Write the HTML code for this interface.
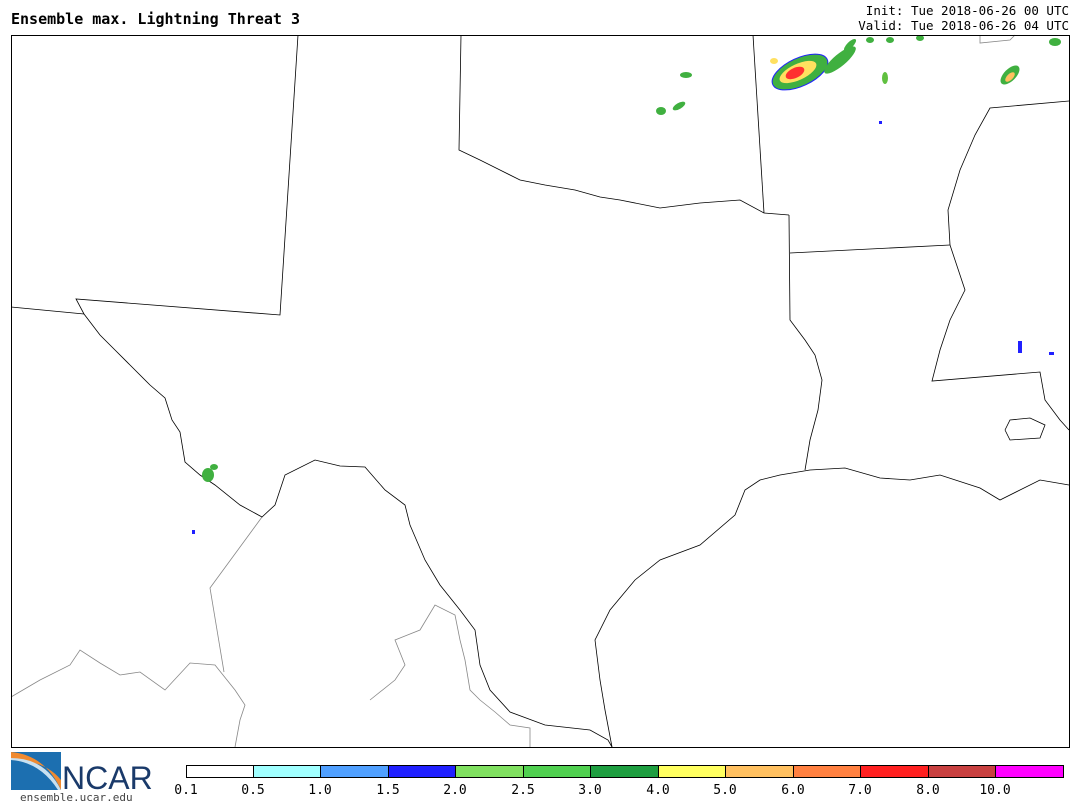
<!DOCTYPE html>
<html><head><style>
body{margin:0;width:1080px;height:810px;background:#fff;overflow:hidden;position:relative;font-family:"DejaVu Sans Mono","Liberation Mono",monospace}
.t{position:absolute;left:11px;top:10px;font-size:15px;font-weight:bold}
.r{position:absolute;right:11px;top:3px;font-size:12.5px;text-align:right;line-height:15px}
.lab{position:absolute;top:783px;font-size:13px;transform:translateX(-50%)}
</style></head><body>
<div class="t">Ensemble max. Lightning Threat 3</div>
<div class="r">Init: Tue 2018-06-26 00 UTC<br>Valid: Tue 2018-06-26 04 UTC</div>
<svg width="1080" height="810" style="position:absolute;left:0;top:0">
<g fill="none" stroke="#888" stroke-width="0.8">
<polyline points="262,517 210,588 224,672"/>
<polyline points="11,697 40,680 50,675 70,665 80,650 100,663 120,675 140,672 165,690 190,663 215,665 235,690 245,705 240,720 235,747"/>
<polyline points="370,700 395,680 405,665 395,640 420,630 435,605 455,615 460,640 465,660 470,690 480,700 495,712 510,725 530,728 530,747"/>
<polyline points="980,35 980,43 1010,40 1015,35"/>
</g>
<g fill="none" stroke="#000" stroke-width="0.8">
<polyline points="298,35 280,315 76,299 84,314 100,335 115,350 130,365 150,385 165,398 172,420 180,432 185,462 200,475 215,485 240,505 262,517 275,505 285,475 315,460 340,466 365,467 385,490 405,505 410,525 425,560 440,585 460,610 475,630 480,665 490,690 510,712 545,725 590,730 608,740 612,747"/>
<polyline points="612,747 605,710 600,680 595,640 610,610 635,580 660,560 700,545 735,515 745,490 760,480 780,475 810,470 845,468 880,478 910,480 940,475 980,488 1000,500 1020,490 1040,480 1069,485"/>
<polyline points="461,35 459,150 480,160 500,170 520,180 545,185 575,190 600,197 620,200 660,208 700,203 740,200 764,213 789,215"/>
<polyline points="753,35 764,213"/>
<polyline points="789,215 790,320 805,340 815,355 822,380 818,410 810,440 805,470"/>
<polyline points="790,253 950,245"/>
<polyline points="950,245 955,260 965,290 950,320 940,350 932,381 1040,372 1045,400 1060,420 1069,430"/>
<polyline points="1069,101 990,108 975,135 960,170 948,210 950,245"/>
<polyline points="11,307 84,314"/>
<polyline points="1005,430 1010,420 1030,418 1045,425 1040,438 1010,440 1005,430"/>
</g>
<g>
<ellipse cx="800" cy="72" rx="30" ry="14" fill="#40b040" stroke="#2020ff" stroke-width="1" transform="rotate(-25 800 72)"/>
<ellipse cx="798" cy="72" rx="20" ry="8" fill="#ffe060" transform="rotate(-25 798 72)"/>
<ellipse cx="795" cy="73" rx="10" ry="5" fill="#ff3030" transform="rotate(-25 795 73)"/>
<ellipse cx="840" cy="60" rx="20" ry="6" fill="#40b040" transform="rotate(-40 840 60)"/>
<ellipse cx="850" cy="45" rx="8" ry="3" fill="#40b040" transform="rotate(-45 850 45)"/>
<ellipse cx="1010" cy="75" rx="12" ry="6" fill="#40b040" transform="rotate(-45 1010 75)"/>
<ellipse cx="1010" cy="77" rx="6" ry="3" fill="#ffc060" transform="rotate(-45 1010 77)"/>
<ellipse cx="885" cy="78" rx="3" ry="6" fill="#60c040"/>
<ellipse cx="661" cy="111" rx="5" ry="4" fill="#40b040"/>
<ellipse cx="679" cy="106" rx="7" ry="3" fill="#40b040" transform="rotate(-30 679 106)"/>
<ellipse cx="686" cy="75" rx="6" ry="3" fill="#40b040"/>
<ellipse cx="208" cy="475" rx="6" ry="7" fill="#40b040"/>
<ellipse cx="214" cy="467" rx="4" ry="3" fill="#40b040"/>
<rect x="1018" y="341" width="4" height="12" fill="#2020ff"/>
<rect x="1049" y="352" width="5" height="3" fill="#2020ff"/>
<rect x="192" y="530" width="3" height="4" fill="#2020ff"/>
<rect x="879" y="121" width="3" height="3" fill="#2020ff"/>
<ellipse cx="870" cy="40" rx="4" ry="3" fill="#40b040"/>
<ellipse cx="890" cy="40" rx="4" ry="3" fill="#40b040"/>
<ellipse cx="920" cy="38" rx="4" ry="3" fill="#40b040"/>
<ellipse cx="1055" cy="42" rx="6" ry="4" fill="#40b040"/>
<ellipse cx="774" cy="61" rx="4" ry="3" fill="#ffe060"/>
</g>
<rect x="11.5" y="35.5" width="1058" height="712" fill="none" stroke="#000" stroke-width="1"/>
<g>
<rect x="11" y="752" width="50" height="38" fill="#1c6fb0"/>
<path d="M11 752 Q45 755 61 790 L61 780 Q45 760 11 760Z" fill="#f08a30"/>
<path d="M11 760 Q40 762 58 790 L61 790 Q45 758 11 758Z" fill="#c8e0f0"/>
<text x="62" y="789" font-family="Liberation Sans,sans-serif" font-size="32" fill="#1a3a6a">NCAR</text>
<text x="20" y="801" font-family="DejaVu Sans Mono,monospace" font-size="11" fill="#444">ensemble.ucar.edu</text>
</g>
<g stroke="none">
<rect x="186" y="765" width="67" height="12" fill="#fff"/>
<rect x="253" y="765" width="67" height="12" fill="#a0ffff"/>
<rect x="320" y="765" width="68" height="12" fill="#50a0ff"/>
<rect x="388" y="765" width="67" height="12" fill="#2020ff"/>
<rect x="455" y="765" width="68" height="12" fill="#80e060"/>
<rect x="523" y="765" width="67" height="12" fill="#50d050"/>
<rect x="590" y="765" width="68" height="12" fill="#1e9e40"/>
<rect x="658" y="765" width="67" height="12" fill="#ffff60"/>
<rect x="725" y="765" width="68" height="12" fill="#ffc060"/>
<rect x="793" y="765" width="67" height="12" fill="#ff8040"/>
<rect x="860" y="765" width="68" height="12" fill="#ff2020"/>
<rect x="928" y="765" width="67" height="12" fill="#c84040"/>
<rect x="995" y="765" width="69" height="12" fill="#ff00ff"/>
</g>
<rect x="186.5" y="765.5" width="877" height="12" fill="none" stroke="#000" stroke-width="1"/>
<g stroke="#000" stroke-width="1">
<line x1="253.5" y1="765" x2="253.5" y2="778"/><line x1="320.5" y1="765" x2="320.5" y2="778"/><line x1="388.5" y1="765" x2="388.5" y2="778"/><line x1="455.5" y1="765" x2="455.5" y2="778"/><line x1="523.5" y1="765" x2="523.5" y2="778"/><line x1="590.5" y1="765" x2="590.5" y2="778"/><line x1="658.5" y1="765" x2="658.5" y2="778"/><line x1="725.5" y1="765" x2="725.5" y2="778"/><line x1="793.5" y1="765" x2="793.5" y2="778"/><line x1="860.5" y1="765" x2="860.5" y2="778"/><line x1="928.5" y1="765" x2="928.5" y2="778"/><line x1="995.5" y1="765" x2="995.5" y2="778"/>
</g>
</svg>
<div class="lab" style="left:186px">0.1</div>
<div class="lab" style="left:253px">0.5</div>
<div class="lab" style="left:320px">1.0</div>
<div class="lab" style="left:388px">1.5</div>
<div class="lab" style="left:455px">2.0</div>
<div class="lab" style="left:523px">2.5</div>
<div class="lab" style="left:590px">3.0</div>
<div class="lab" style="left:658px">4.0</div>
<div class="lab" style="left:725px">5.0</div>
<div class="lab" style="left:793px">6.0</div>
<div class="lab" style="left:860px">7.0</div>
<div class="lab" style="left:928px">8.0</div>
<div class="lab" style="left:995px">10.0</div>
</body></html>
